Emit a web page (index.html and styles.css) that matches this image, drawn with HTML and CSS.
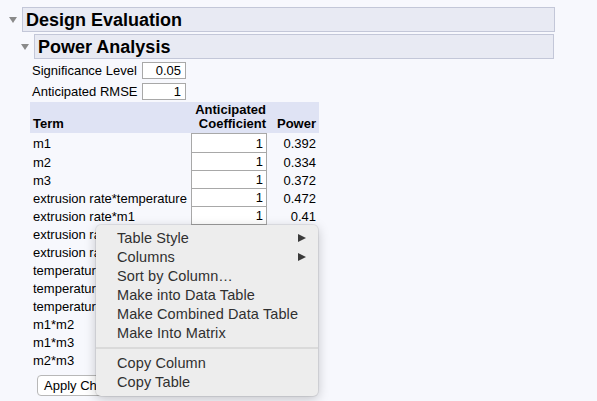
FILE: index.html
```html
<!DOCTYPE html>
<html lang="en">
<head>
    <meta charset="UTF-8">
    <title>Design Evaluation</title>
    <link rel="stylesheet" href="styles.css">
</head>
<body>
    <div class="report">
        <div class="outline-row">
            <span class="disclosure"></span>
            <div class="outline-title">Design Evaluation</div>
        </div>
        <div class="outline-body">
            <div class="outline-row">
                <span class="disclosure"></span>
                <div class="outline-title">Power Analysis</div>
            </div>
            <div class="outline-content">
                <div class="params">
                    <span>Significance Level</span><span class="edit-box">0.05</span>
                    <span>Anticipated RMSE</span><span class="edit-box">1</span>
                </div>
                <table class="power-table">
                    <thead>
                        <tr>
                            <th class="term">Term</th>
                            <th class="coef">Anticipated<br>Coefficient</th>
                            <th class="power">Power</th>
                        </tr>
                    </thead>
                    <tbody>
                        <tr><td class="term">m1</td><td class="coef">1</td><td class="power">0.392</td></tr>
                        <tr><td class="term">m2</td><td class="coef">1</td><td class="power">0.334</td></tr>
                        <tr><td class="term">m3</td><td class="coef">1</td><td class="power">0.372</td></tr>
                        <tr><td class="term">extrusion rate*temperature</td><td class="coef">1</td><td class="power">0.472</td></tr>
                        <tr><td class="term">extrusion rate*m1</td><td class="coef">1</td><td class="power">0.41</td></tr>
                        <tr><td class="term">extrusion rate*m2</td><td class="coef">1</td><td class="power">0.353</td></tr>
                        <tr><td class="term">extrusion rate*m3</td><td class="coef">1</td><td class="power">0.39</td></tr>
                        <tr><td class="term">temperature*m1</td><td class="coef">1</td><td class="power">0.41</td></tr>
                        <tr><td class="term">temperature*m2</td><td class="coef">1</td><td class="power">0.353</td></tr>
                        <tr><td class="term">temperature*m3</td><td class="coef">1</td><td class="power">0.39</td></tr>
                        <tr><td class="term">m1*m2</td><td class="coef">1</td><td class="power">0.21</td></tr>
                        <tr><td class="term">m1*m3</td><td class="coef">1</td><td class="power">0.223</td></tr>
                        <tr><td class="term">m2*m3</td><td class="coef">1</td><td class="power">0.196</td></tr>
                    </tbody>
                </table>
                <button class="apply-btn">Apply Changes</button>
            </div>
        </div>
    </div>

    <div class="context-menu">
        <div class="menu-item has-sub">Table Style</div>
        <div class="menu-item has-sub">Columns</div>
        <div class="menu-item">Sort by Column…</div>
        <div class="menu-item">Make into Data Table</div>
        <div class="menu-item">Make Combined Data Table</div>
        <div class="menu-item">Make Into Matrix</div>
        <div class="menu-sep"></div>
        <div class="menu-item">Copy Column</div>
        <div class="menu-item">Copy Table</div>
    </div>
</body>
</html>
```

FILE: styles.css
```css
body {
    margin: 0;
    background-color: #f7f8fd;
    font-family: "Liberation Sans", Arial, sans-serif;
    font-size: 13px;
    color: #000;
}
.report {
    width: 555px;
    padding-top: 7px;
}
.outline-row {
    display: flex;
    align-items: center;
    gap: 5px;
    padding-left: 9px;
}
.disclosure {
    width: 0;
    height: 0;
    margin-top: 1px;
    border-left: 4px solid transparent;
    border-right: 4px solid transparent;
    border-top: 6px solid #8a8a8a;
}
.outline-title {
    flex: 1;
    height: 23px;
    line-height: 24px;
    padding-left: 3px;
    border: 1px solid #c3c7d8;
    background-color: #e8eaf3;
    font-size: 18px;
    font-weight: bold;
}
.outline-body {
    margin-top: 2px;
    margin-left: 12px;
    padding-right: 1px;
}
.outline-content {
    padding-left: 18px;
}
.params {
    display: grid;
    grid-template-columns: 110px 44px;
    row-gap: 4px;
    align-items: center;
    margin-top: 3px;
    padding-left: 2px;
}
.edit-box {
    height: 15px;
    line-height: 16px;
    padding-right: 4px;
    border: 1px solid #a8a8a8;
    background-color: #fff;
    text-align: right;
}

/* power table */
.power-table {
    border-collapse: separate;
    border-spacing: 0;
    margin-top: 2px;
}
.power-table th {
    background-color: #dfe3f4;
    font-weight: bold;
    vertical-align: bottom;
    line-height: 14px;
    height: 29px;
    padding: 0 0 2px 0;
    text-align: right;
}
.power-table th.term {
    width: 158px;
    padding-left: 3px;
    text-align: left;
}
.power-table th.coef {
    width: 75px;
    padding-right: 1px;
}
.power-table th.power {
    width: 49px;
    padding-right: 3px;
}
.power-table td {
    height: 17px;
    line-height: 17px;
    padding: 0;
    text-align: right;
}
.power-table td.term {
    padding-left: 3px;
    text-align: left;
}
.power-table td.coef {
    padding-right: 3px;
    border: 1px solid #a8a8a8;
    border-top: none;
    background-color: #fff;
}
.power-table tbody tr:first-child td.coef {
    border-top: 1px solid #a8a8a8;
}
.power-table td.power {
    padding-right: 3px;
}
.power-table tbody tr:first-child td {
    padding-top: 1px;
}
.apply-btn {
    margin: 6px 0 0 7px;
    padding: 2px 7px 2px 6px;
    border: 1px solid #b8b8b8;
    border-radius: 4px;
    background-color: #fff;
    font-family: "Liberation Sans", Arial, sans-serif;
    font-size: 13px;
    color: #000;
}

/* context menu */
.context-menu {
    position: absolute;
    left: 96px;
    top: 225px;
    width: 222px;
    padding: 4px 0;
    background-color: #ededed;
    border-radius: 5px;
    box-shadow: 0 3px 12px rgba(0, 0, 0, 0.22), 0 0 0 1px rgba(0, 0, 0, 0.07);
}
.menu-item {
    position: relative;
    height: 19px;
    line-height: 19px;
    padding-left: 21px;
    font-size: 14.5px;
    letter-spacing: 0.1px;
    color: #303030;
}
.menu-item.has-sub::after {
    content: "";
    position: absolute;
    right: 12px;
    top: 5px;
    border-top: 4px solid transparent;
    border-bottom: 4px solid transparent;
    border-left: 8px solid #3a3a3a;
}
.menu-sep {
    height: 2px;
    margin: 4px 0 5px;
    background-color: #dadada;
}
```
